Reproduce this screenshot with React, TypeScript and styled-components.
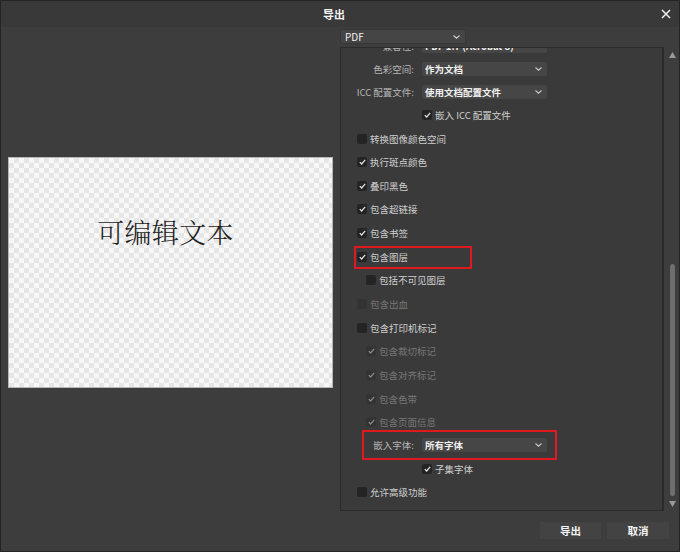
import React from "react";
import styled, { createGlobalStyle } from "styled-components";

const GlobalStyle = createGlobalStyle`
  html, body {
    margin: 0;
    padding: 0;
    background: #3d3d3d;
  }
  * {
    box-sizing: border-box;
  }
`;

const Dialog = styled.div`
  width: 680px;
  height: 552px;
  background: #3d3d3d;
  border: 1px solid #242424;
  display: flex;
  flex-direction: column;
  font-family: "Noto Sans CJK SC", "Noto Sans", sans-serif;
  color: #d0d0d0;
`;

const TitleBar = styled.div`
  height: 26px;
  display: grid;
  grid-template-columns: 1fr auto 1fr;
  align-items: center;
  background: #393939;
`;

const Title = styled.div`
  grid-column: 2;
  font-size: 11px;
  font-weight: 700;
  color: #f2f2f2;
  margin-left: -12px;
`;

const CloseButton = styled.div`
  grid-column: 3;
  justify-self: end;
  width: 10px;
  height: 10px;
  margin-right: 8px;
  display: flex;
`;

const Body = styled.div`
  display: flex;
  height: 484px;
`;

const PreviewColumn = styled.div`
  width: 339px;
  display: flex;
  align-items: center;
  justify-content: center;
  padding-top: 6px;
`;

const Preview = styled.div`
  width: 325px;
  height: 231px;
  border: 1px solid #b8b8b8;
  background-color: #f7f7f7;
  background-image: linear-gradient(45deg, #e6e6e6 25%, transparent 25%),
    linear-gradient(-45deg, #e6e6e6 25%, transparent 25%),
    linear-gradient(45deg, transparent 75%, #e6e6e6 75%),
    linear-gradient(-45deg, transparent 75%, #e6e6e6 75%);
  background-size: 10px 10px;
  background-position: 0 0, 0 5px, 5px -5px, -5px 0;
  display: flex;
  justify-content: center;
  padding: 59px 10px 0 0;
`;

const PreviewText = styled.div`
  font-family: "Noto Serif CJK SC", "Noto Sans CJK SC", serif;
  font-weight: 300;
  font-size: 27px;
  line-height: 30px;
  letter-spacing: 0.3px;
  color: #1e1e1e;
`;

const SettingsColumn = styled.div`
  flex: 1;
  display: flex;
  flex-direction: column;
`;

const FormatSelect = styled.div`
  margin-top: 2px;
  width: 126px;
  height: 15px;
  background: #454545;
  border: 1px solid #363636;
  border-radius: 2px;
  display: flex;
  align-items: center;
  justify-content: space-between;
  padding: 0 5px 0 4px;
  font-size: 10px;
  color: #f0f0f0;
`;

const PanelRow = styled.div`
  margin-top: 3px;
  flex: 1;
  display: flex;
`;

const Panel = styled.div`
  width: 324px;
  background: #3a3a3a;
  border: 1px solid #2b2b2b;
  border-right-width: 2px;
  overflow: hidden;
`;

const PanelContent = styled.div`
  margin-top: -13px;
`;

const Row = styled.div<{ indent: number; tall: boolean }>`
  position: relative;
  height: ${(p) => (p.tall ? "23.65px" : "22.7px")};
  display: flex;
  align-items: center;
  padding-left: ${(p) => p.indent}px;
  font-size: 9.5px;
`;

const Label = styled.div`
  width: 73px;
  margin-right: 8px;
  text-align: right;
  color: #b6b6b6;
  white-space: nowrap;
`;

const Select = styled.div`
  width: 125px;
  height: 14px;
  background: #464646;
  border-radius: 2px;
  display: flex;
  align-items: center;
  justify-content: space-between;
  padding: 0 5px 0 3px;
  color: #f2f2f2;
  font-weight: 700;
  white-space: nowrap;
`;

const Box = styled.div<{ disabled: boolean }>`
  width: 10px;
  height: 10px;
  border-radius: 2px;
  background: ${(p) => (p.disabled ? "#333333" : "#242424")};
  display: flex;
  align-items: center;
  justify-content: center;
  margin-right: 3px;
  flex-shrink: 0;
`;

const CheckText = styled.span<{ disabled: boolean }>`
  color: ${(p) => (p.disabled ? "#777777" : "#cfcfcf")};
  white-space: nowrap;
`;

const Highlight = styled.div<{ left: number; top: number; w: number; h: number }>`
  position: absolute;
  left: ${(p) => p.left}px;
  top: ${(p) => p.top}px;
  width: ${(p) => p.w}px;
  height: ${(p) => p.h}px;
  border: 2px solid #e0191f;
  pointer-events: none;
`;

const Scrollbar = styled.div`
  flex: 1;
  display: flex;
  flex-direction: column;
  align-items: center;
  padding: 5px 0 4px 2px;
`;

const ScrollThumb = styled.div`
  margin-top: auto;
  margin-bottom: 5px;
  width: 5px;
  height: 232px;
  border-radius: 3px;
  background: #6e6e6e;
`;

const Footer = styled.div`
  flex: 1;
  display: flex;
  justify-content: flex-end;
  align-items: flex-start;
  gap: 6px;
  padding: 11px 10px 0 0;
`;

const Button = styled.div<{ w: number }>`
  width: ${(p) => p.w}px;
  height: 17px;
  background: #434343;
  display: flex;
  align-items: center;
  justify-content: center;
  font-size: 10.5px;
  font-weight: 700;
  color: #f4f4f4;
`;

const Chevron = ({ color = "#c8c8c8" }: { color?: string }) => (
  <svg width="7" height="4" viewBox="0 0 7 4">
    <path d="M0.5 0.5 L3.5 3.2 L6.5 0.5" fill="none" stroke={color} strokeWidth="1.1" />
  </svg>
);

const CheckMark = ({ color }: { color: string }) => (
  <svg width="7" height="6" viewBox="0 0 7 6">
    <path d="M0.8 3.2 L2.6 5 L6.2 0.9" fill="none" stroke={color} strokeWidth="1.2" />
  </svg>
);

type Item =
  | { kind: "select"; label: string; value: string; mark?: boolean }
  | {
      kind: "check";
      text: string;
      checked: boolean;
      level: "main" | "sub" | "field";
      disabled?: boolean;
      mark?: boolean;
    };

const items: Item[] = [
  { kind: "select", label: "兼容性:", value: "PDF 1.7 (Acrobat 8)" },
  { kind: "select", label: "色彩空间:", value: "作为文档" },
  { kind: "select", label: "ICC 配置文件:", value: "使用文档配置文件" },
  { kind: "check", text: "嵌入 ICC 配置文件", checked: true, level: "field" },
  { kind: "check", text: "转换图像颜色空间", checked: false, level: "main" },
  { kind: "check", text: "执行斑点颜色", checked: true, level: "main" },
  { kind: "check", text: "叠印黑色", checked: true, level: "main" },
  { kind: "check", text: "包含超链接", checked: true, level: "main" },
  { kind: "check", text: "包含书签", checked: true, level: "main" },
  { kind: "check", text: "包含图层", checked: true, level: "main", mark: true },
  { kind: "check", text: "包括不可见图层", checked: false, level: "sub" },
  { kind: "check", text: "包含出血", checked: false, level: "main", disabled: true },
  { kind: "check", text: "包含打印机标记", checked: false, level: "main" },
  { kind: "check", text: "包含裁切标记", checked: true, level: "sub", disabled: true },
  { kind: "check", text: "包含对齐标记", checked: true, level: "sub", disabled: true },
  { kind: "check", text: "包含色带", checked: true, level: "sub", disabled: true },
  { kind: "check", text: "包含页面信息", checked: true, level: "sub", disabled: true },
  { kind: "select", label: "嵌入字体:", value: "所有字体", mark: true },
  { kind: "check", text: "子集字体", checked: true, level: "field" },
  { kind: "check", text: "允许高级功能", checked: false, level: "main" },
];

const indents = { main: 16, sub: 25, field: 81 };

function SettingRow({ item }: { item: Item }) {
  if (item.kind === "select") {
    return (
      <Row indent={0} tall={false}>
        <Label>{item.label}</Label>
        <Select>
          <span>{item.value}</span>
          <Chevron />
        </Select>
        {item.mark && <Highlight left={21} top={-4} w={195} h={30} />}
      </Row>
    );
  }
  const disabled = !!item.disabled;
  return (
    <Row indent={indents[item.level]} tall>
      <Box disabled={disabled}>
        {item.checked && <CheckMark color={disabled ? "#8a8a8a" : "#e6e6e6"} />}
      </Box>
      <CheckText disabled={disabled}>{item.text}</CheckText>
      {item.mark && <Highlight left={13} top={1} w={118} h={23} />}
    </Row>
  );
}

export default function App() {
  return (
    <>
      <GlobalStyle />
      <Dialog>
        <TitleBar>
          <Title>导出</Title>
          <CloseButton>
            <svg width="10" height="10" viewBox="0 0 10 10">
              <path d="M1 1 L9 9 M9 1 L1 9" stroke="#f0f0f0" strokeWidth="1.5" />
            </svg>
          </CloseButton>
        </TitleBar>
        <Body>
          <PreviewColumn>
            <Preview>
              <PreviewText>可编辑文本</PreviewText>
            </Preview>
          </PreviewColumn>
          <SettingsColumn>
            <FormatSelect>
              <span>PDF</span>
              <Chevron color="#d0d0d0" />
            </FormatSelect>
            <PanelRow>
              <Panel>
                <PanelContent>
                  {items.map((item, index) => (
                    <SettingRow key={index} item={item} />
                  ))}
                </PanelContent>
              </Panel>
              <Scrollbar>
                <svg width="7" height="6" viewBox="0 0 7 6">
                  <path d="M3.5 0 L7 6 L0 6 Z" fill="#9a9a9a" />
                </svg>
                <ScrollThumb />
                <svg width="7" height="6" viewBox="0 0 7 6">
                  <path d="M0 0 L7 0 L3.5 6 Z" fill="#9a9a9a" />
                </svg>
              </Scrollbar>
            </PanelRow>
          </SettingsColumn>
        </Body>
        <Footer>
          <Button w={61}>导出</Button>
          <Button w={62}>取消</Button>
        </Footer>
      </Dialog>
    </>
  );
}
